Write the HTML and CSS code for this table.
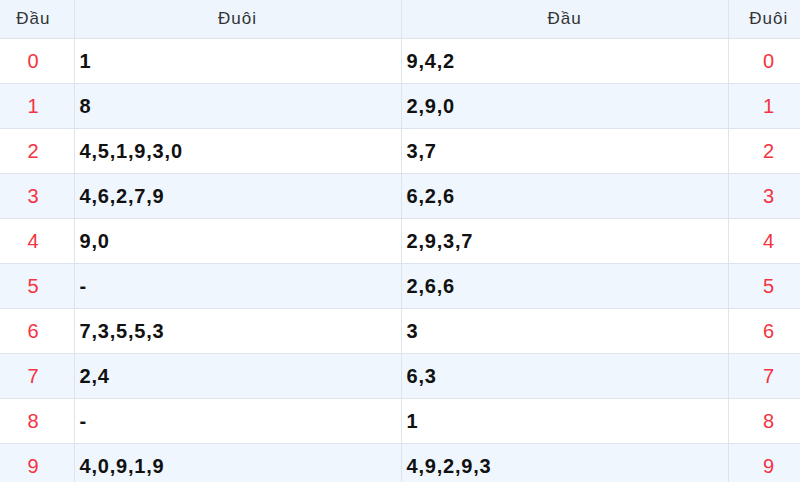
FILE: index.html
```html
<!DOCTYPE html>
<html lang="vi">
<head>
<meta charset="utf-8">
<title>Đầu Đuôi</title>
<link rel="stylesheet" href="styles.css">
</head>
<body>
<table class="lo-table">
  <colgroup>
    <col class="c-head">
    <col class="c-val">
    <col class="c-val">
    <col class="c-tail">
  </colgroup>
  <thead>
    <tr><th>Đầu</th><th>Đuôi</th><th>Đầu</th><th>Đuôi</th></tr>
  </thead>
  <tbody>
    <tr><td class="key">0</td><td class="val">1</td><td class="val">9,4,2</td><td class="key">0</td></tr>
    <tr><td class="key">1</td><td class="val">8</td><td class="val">2,9,0</td><td class="key">1</td></tr>
    <tr><td class="key">2</td><td class="val">4,5,1,9,3,0</td><td class="val">3,7</td><td class="key">2</td></tr>
    <tr><td class="key">3</td><td class="val">4,6,2,7,9</td><td class="val">6,2,6</td><td class="key">3</td></tr>
    <tr><td class="key">4</td><td class="val">9,0</td><td class="val">2,9,3,7</td><td class="key">4</td></tr>
    <tr><td class="key">5</td><td class="val">-</td><td class="val">2,6,6</td><td class="key">5</td></tr>
    <tr><td class="key">6</td><td class="val">7,3,5,5,3</td><td class="val">3</td><td class="key">6</td></tr>
    <tr><td class="key">7</td><td class="val">2,4</td><td class="val">6,3</td><td class="key">7</td></tr>
    <tr><td class="key">8</td><td class="val">-</td><td class="val">1</td><td class="key">8</td></tr>
    <tr><td class="key">9</td><td class="val">4,0,9,1,9</td><td class="val">4,9,2,9,3</td><td class="key">9</td></tr>
  </tbody>
</table>
</body>
</html>
```
FILE: styles.css
```css
html, body {
  margin: 0;
  padding: 0;
  background: #ffffff;
}

body {
  font-family: "Liberation Sans", Arial, sans-serif;
  overflow: hidden;
}

.lo-table {
  width: 800px;
  border-collapse: collapse;
  table-layout: fixed;
}

.c-head { width: 74px; }
.c-val { width: 327px; }
.c-tail { width: 72px; }

.lo-table th,
.lo-table td {
  border: 1px solid #dde4ec;
  padding: 0 5px;
  vertical-align: middle;
}

.lo-table tr > :first-child {
  border-left: none;
  padding-left: 3px;
  padding-right: 10px;
}

.lo-table tr > :last-child {
  border-right: none;
  padding-left: 12px;
  padding-right: 3px;
}

.lo-table thead th { border-top: none; }

.lo-table thead th {
  height: 38px;
  background: #eef5fd;
  color: #333333;
  font-size: 17px;
  font-weight: normal;
  letter-spacing: 1px;
  text-align: center;
}

.lo-table tbody td {
  height: 44px;
}

.lo-table tbody tr:nth-child(even) td {
  background: #eff6fe;
}

.key {
  text-align: center;
  color: #f5333f;
  font-size: 20px;
  letter-spacing: 0.6px;
}

.val {
  text-align: left;
  color: #111111;
  font-size: 20px;
  font-weight: bold;
  letter-spacing: 0.8px;
}
```
